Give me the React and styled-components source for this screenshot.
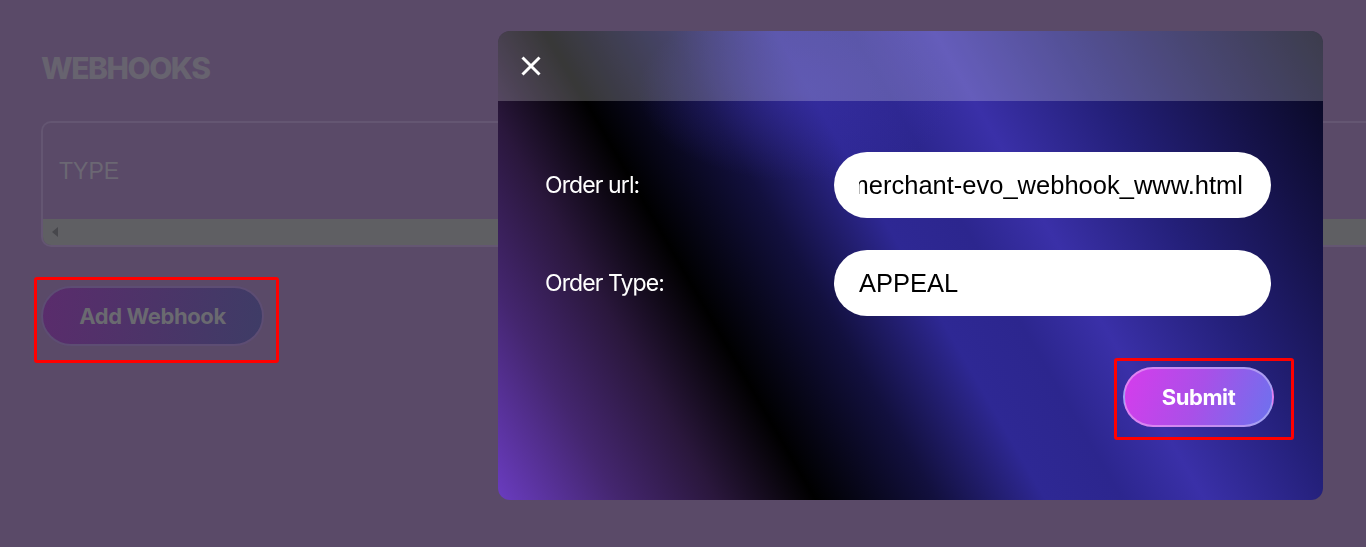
import React, { useEffect, useRef } from "react";
import styled, { createGlobalStyle } from "styled-components";

const GlobalStyle = createGlobalStyle`
  html, body {
    margin: 0;
    padding: 0;
    overflow: hidden;
    background: #5a4a68;
  }
  * { box-sizing: border-box; }
`;

const Page = styled.div`
  min-height: 100vh;
  padding: 50px 0 0 41px;
  background: #5a4a68;
  font-family: Inter, "Liberation Sans", sans-serif;
`;

const Title = styled.h1`
  margin: 0;
  font-size: 30px;
  line-height: 36px;
  font-weight: 800;
  letter-spacing: -1.5px;
  color: #67636f;
`;

/* the table keeps going past the right edge of the window */
const TableCard = styled.div`
  margin-top: 35px;
  height: 126px;
  border: 2px solid #645672;
  border-right: none;
  border-radius: 10px 0 0 10px;
  overflow: hidden;
  display: flex;
  flex-direction: column;
  justify-content: space-between;
`;

const HeadCell = styled.div`
  padding: 35px 0 0 16px;
  font-family: "Liberation Sans", Arial, sans-serif;
  font-size: 23px;
  line-height: 26px;
  color: #6b6773;
`;

const ScrollTrack = styled.div`
  height: 26px;
  background: #5f5f63;
  display: flex;
  align-items: center;
  padding-left: 9px;
`;

const ArrowLeft = styled.span`
  width: 0;
  height: 0;
  border-top: 5px solid transparent;
  border-bottom: 5px solid transparent;
  border-right: 6px solid #47474c;
`;

const Highlight = styled.div`
  display: inline-flex;
  border: 3px solid #ff0000;
  border-radius: 3px;
  padding: ${(p) => p.$pad};
`;

const PageActions = styled.div`
  margin: 30px 0 0 -7px;
`;

const PillButton = styled.button`
  height: 60px;
  width: ${(p) => p.$width}px;
  border-radius: 30px;
  font-family: Inter, "Liberation Sans", sans-serif;
  font-size: 22px;
  font-weight: 700;
  letter-spacing: -0.4px;
  cursor: pointer;
  border: 2px solid ${(p) => (p.$muted ? "#5d4d73" : "rgba(255,255,255,0.35)")};
  color: ${(p) => (p.$muted ? "#6a6a70" : "#ffffff")};
  background: ${(p) =>
    p.$muted
      ? "linear-gradient(100deg, #5a2c6c 0%, #4c3468 50%, #3e3c66 100%)"
      : "linear-gradient(110deg, #d63cec 0%, #a950e8 50%, #6c72ee 100%)"};
`;

const Modal = styled.div`
  position: fixed;
  left: 498px;
  top: 31px;
  width: 825px;
  height: 469px;
  border-radius: 12px;
  overflow: hidden;
  display: flex;
  flex-direction: column;
  background:
    radial-gradient(ellipse 160px 90px at 300px 60px, rgba(58, 48, 168, 0.5), transparent),
    linear-gradient(
      60deg,
      #6a3cc0 0%,
      #44266f 11%,
      #2a173c 20%,
      #000000 29%,
      #12103e 40%,
      #2e2894 50%,
      #2c268e 57%,
      #3a30a8 64.5%,
      #24207a 76%,
      #151248 88%,
      #06061a 100%
    );
  font-family: Inter, "Liberation Sans", sans-serif;
`;

const ModalHeader = styled.div`
  height: 70px;
  flex-shrink: 0;
  display: flex;
  align-items: center;
  padding-left: 23px;
  background: rgba(255, 255, 255, 0.22);
`;

const CloseButton = styled.button`
  border: none;
  background: none;
  padding: 0;
  width: 20px;
  height: 20px;
  display: flex;
  cursor: pointer;
`;

const ModalBody = styled.form`
  flex: 1;
  display: grid;
  grid-template-columns: 1fr 437px;
  row-gap: 32px;
  align-items: center;
  align-content: start;
  padding: 51px 52px 0 47px;
`;

const Label = styled.label`
  color: #ffffff;
  font-size: 23px;
  letter-spacing: -0.9px;
`;

const Field = styled.input`
  height: 66px;
  width: 100%;
  border: none;
  outline: none;
  border-radius: 33px;
  background: #ffffff;
  padding: 0 28px 0 25px;
  font-family: "Liberation Sans", Arial, sans-serif;
  font-size: 25.5px;
  color: #000000;
  caret-color: #000000;
`;

const SubmitRow = styled.div`
  grid-column: 2;
  justify-self: end;
  margin: 10px -23px 0 0;
`;

const CloseIcon = () => (
  <svg width="20" height="20" viewBox="0 0 20 20">
    <path d="M1.5 1.5 L18.5 18.5 M18.5 1.5 L1.5 18.5" stroke="#fff" strokeWidth="3" fill="none" />
  </svg>
);

export default function App() {
  const urlRef = useRef(null);

  useEffect(() => {
    // keep the end of the long url in view, caret after the last char
    const el = urlRef.current;
    if (!el) return;
    el.focus();
    const end = el.value.length;
    el.setSelectionRange(end, end);
    el.scrollLeft = el.scrollWidth;
  }, []);

  return (
    <>
      <GlobalStyle />
      <Page>
        <Title>WEBHOOKS</Title>
        <TableCard>
          <HeadCell>TYPE</HeadCell>
          <ScrollTrack>
            <ArrowLeft />
          </ScrollTrack>
        </TableCard>
        <PageActions>
          <Highlight $pad="6px 12px 14px 4px">
            <PillButton $muted $width={223}>Add Webhook</PillButton>
          </Highlight>
        </PageActions>
      </Page>

      <Modal>
        <ModalHeader>
          <CloseButton aria-label="close">
            <CloseIcon />
          </CloseButton>
        </ModalHeader>
        <ModalBody onSubmit={(e) => e.preventDefault()}>
          <Label htmlFor="order-url">Order url:</Label>
          <Field
            id="order-url"
            ref={urlRef}
            defaultValue="https://merchant-evo_webhook_www.html"
          />
          <Label htmlFor="order-type">Order Type:</Label>
          <Field id="order-type" defaultValue="APPEAL" />
          <SubmitRow>
            <Highlight $pad="6px 17px 10px 6px">
              <PillButton $width={151}>Submit</PillButton>
            </Highlight>
          </SubmitRow>
        </ModalBody>
      </Modal>
    </>
  );
}
